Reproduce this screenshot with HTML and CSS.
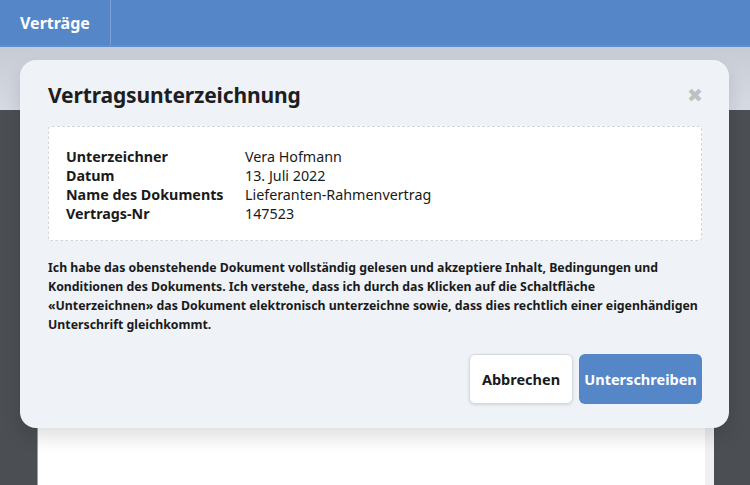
FILE: index.html
```html
<!DOCTYPE html>
<html lang="de">
<head>
    <meta charset="UTF-8">
    <meta name="viewport" content="width=device-width, initial-scale=1.0">
    <title>Verträge</title>
    <link rel="stylesheet" href="styles.css">
</head>
<body>
    <nav class="topbar">
        <div class="brand">Verträge</div>
    </nav>

    <section class="workspace">
        <div class="toolbar"></div>
        <div class="viewer">
            <div class="page"></div>
        </div>
    </section>

    <div class="modal">
        <div class="modal-head">
            <h2>Vertragsunterzeichnung</h2>
            <span class="close">&#10006;</span>
        </div>

        <div class="info-box">
            <div class="info-label">Unterzeichner</div>
            <div class="info-value">Vera Hofmann</div>
            <div class="info-label">Datum</div>
            <div class="info-value">13. Juli 2022</div>
            <div class="info-label">Name des Dokuments</div>
            <div class="info-value">Lieferanten-Rahmenvertrag</div>
            <div class="info-label">Vertrags-Nr</div>
            <div class="info-value">147523</div>
        </div>

        <p class="consent">Ich habe das obenstehende Dokument vollständig gelesen und akzeptiere Inhalt, Bedingungen und Konditionen des Dokuments. Ich verstehe, dass ich durch das Klicken auf die Schaltfläche «Unterzeichnen» das Dokument elektronisch unterzeichne sowie, dass dies rechtlich einer eigenhändigen Unterschrift gleichkommt.</p>

        <div class="modal-actions">
            <button class="btn btn-cancel">Abbrechen</button>
            <button class="btn btn-sign">Unterschreiben</button>
        </div>
    </div>
</body>
</html>
```

FILE: styles.css
```css
* {
    margin: 0;
    padding: 0;
    box-sizing: border-box;
    font-family: "Noto Sans", "Open Sans", sans-serif;
}

body {
    width: 750px;
    height: 485px;
    overflow: hidden;
    background-color: #4b4f53;
    position: relative;
}

.topbar {
    height: 47px;
    background-color: #5587c8;
    border-bottom: 2px solid #5e8fcd;
    display: flex;
}

.brand {
    width: 111px;
    padding-left: 20px;
    border-right: 1px solid #7ba2d6;
    color: white;
    font-size: 16px;
    font-weight: bold;
    display: flex;
    align-items: center;
}

.toolbar {
    height: 63px;
    background: linear-gradient(#c6cbd4, #d5dae3);
}

.viewer {
    height: 375px;
    padding-left: 37px;
    display: flex;
}

.page {
    width: 677px;
    background-color: white;
    border-left: 1px solid #9a9ea3;
    border-right: 9px solid #eff0f2;
}

.modal {
    position: absolute;
    left: 20px;
    top: 60px;
    width: 709px;
    height: 368px;
    background-color: #eff3f8;
    border-radius: 16px;
    padding: 20px 27px 24px 28px;
    box-shadow: 0 10px 18px rgba(0,0,0,0.12);
    display: flex;
    flex-direction: column;
}

.modal-head {
    display: flex;
    justify-content: space-between;
    align-items: center;
    height: 30px;
    margin-bottom: 16px;
}

.modal-head h2 {
    font-size: 21px;
    color: #1e1e1e;
    font-weight: bold;
    letter-spacing: -0.15px;
}

.close {
    color: #c0c0c0;
    font-size: 19px;
    margin-right: -1px;
    font-family: "DejaVu Sans", sans-serif;
}

.info-box {
    background-color: white;
    border: 1px dashed #d3d6db;
    border-radius: 4px;
    padding: 20px 17px 17px;
    display: grid;
    grid-template-columns: 179px 1fr;
    line-height: 19px;
    font-size: 14.3px;
    color: #1a1a1a;
}

.info-label {
    font-weight: bold;
}

.consent {
    margin-top: 17px;
    font-size: 12.3px;
    font-weight: bold;
    line-height: 19px;
    color: #1a1a1a;
}

.modal-actions {
    margin-top: auto;
    display: flex;
    justify-content: flex-end;
    gap: 6px;
}

.btn {
    height: 50px;
    border-radius: 6px;
    font-size: 14.5px;
    font-weight: bold;
    cursor: pointer;
}

.btn-cancel {
    width: 104px;
    background-color: white;
    color: #1a1a1a;
    border: 1px solid #d6d9de;
    box-shadow: 0 1px 3px rgba(0,0,0,0.12);
}

.btn-sign {
    width: 123px;
    background-color: #5587c8;
    color: white;
    border: none;
}
```
